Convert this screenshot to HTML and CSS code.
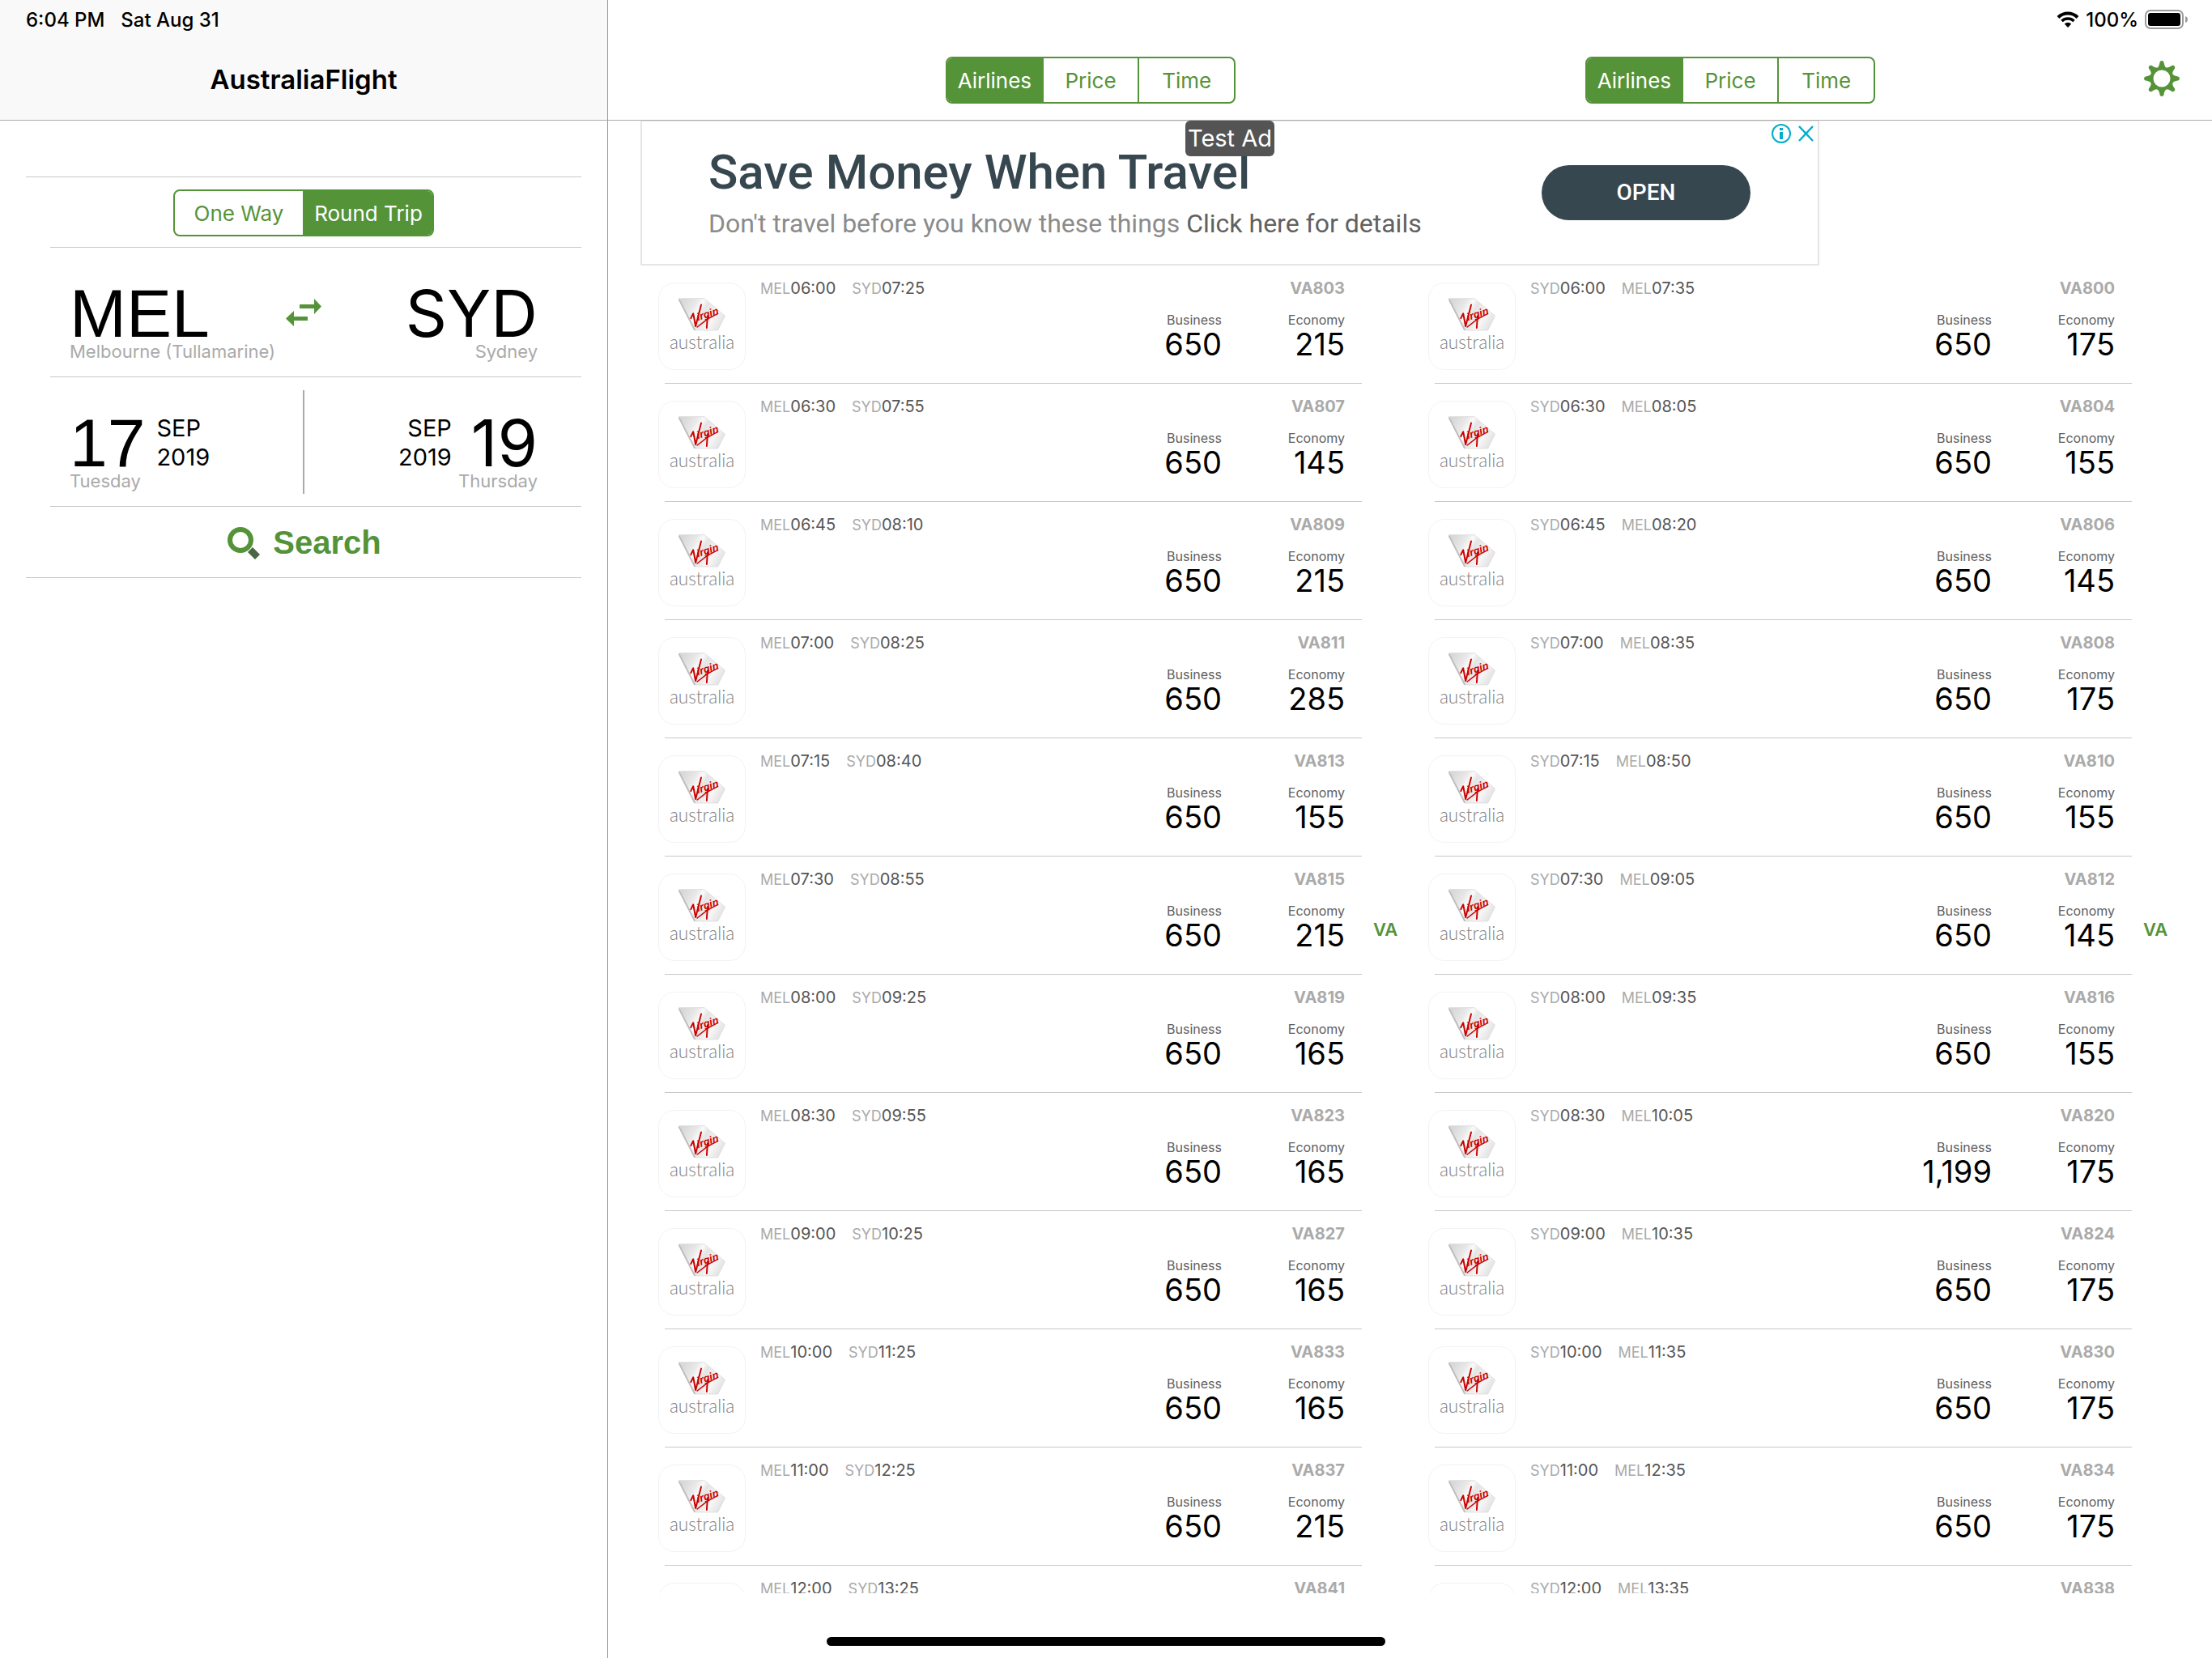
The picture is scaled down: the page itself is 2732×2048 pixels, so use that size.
FILE: index.html
```html
<!DOCTYPE html>
<html lang="en">
<head>
  <meta charset="UTF-8" />
  <meta name="viewport" content="width=device-width, initial-scale=1.0"/>
  <title>AustraliaFlight</title>
  <link rel="stylesheet" href="styles.css">
</head>
<body>
  <svg class="defs" aria-hidden="true">
    <defs>
      <linearGradient id="tail" x1="0" y1="0.3" x2="1" y2="0.7">
        <stop offset="0" stop-color="#d8d8d8"/>
        <stop offset="0.25" stop-color="#e8e8e8"/>
        <stop offset="0.38" stop-color="#fafafa"/>
        <stop offset="0.5" stop-color="#e4e4e4"/>
        <stop offset="0.75" stop-color="#f6f6f6"/>
        <stop offset="1" stop-color="#e0e0e0"/>
      </linearGradient>
      <symbol id="virgin" viewBox="0 0 108 108">
        <path d="M25 19H57L83 41L74 59H45Z" fill="url(#tail)" stroke="#dedede"/>
        <path d="M25 20L45 59" fill="none" stroke="#bdbdbd" stroke-width="2"/>
        <g fill="none" stroke="#cc0000" stroke-linecap="round" stroke-linejoin="round">
          <path d="M40 44L43 38L46 54L53 27" stroke-width="2"/>
          <path d="M48 55L61 45L74 38" stroke-width="1.5"/>
          <path d="M61 41L60 56" stroke-width="2"/>
        </g>
        <text class="virgin-word" transform="rotate(-18 49 47)" x="49" y="47">irgin</text>
        <text class="australia-word" x="54" y="83" text-anchor="middle">australia</text>
      </symbol>
    </defs>
  </svg>

  <aside class="sidebar">
    <header class="sidebar-header">
      <div class="status"><span>6:04 PM</span><span>Sat Aug 31</span></div>
      <h1>AustraliaFlight</h1>
    </header>
    <form class="search-form" id="searchForm">
      <hr>
      <div class="trip-row">
        <div class="segments trip">
          <button type="button">One Way</button>
          <button type="button" class="active">Round Trip</button>
        </div>
      </div>
      <hr class="inset">
      <div class="pair">
        <button type="button" class="choice">
          <span class="big neue">MEL</span>
          <span class="label">Melbourne (Tullamarine)</span>
        </button>
        <button type="button" class="swap" aria-label="Swap airports">
          <svg width="44" height="34" viewBox="0 0 44 34" fill="#559339"><path d="M17 7H35V0L44 9.500L35 19V12H17Z"/><path d="M27 22H10V15L0 24.500L10 34V27H27Z"/></svg>
        </button>
        <button type="button" class="choice right">
          <span class="big">SYD</span>
          <span class="label">Sydney</span>
        </button>
      </div>
      <hr class="inset">
      <div class="pair">
        <button type="button" class="choice">
          <span class="date"><span class="big neue">17</span><span class="month">SEP<br>2019</span></span>
          <span class="label">Tuesday</span>
        </button>
        <div class="bar"></div>
        <button type="button" class="choice right">
          <span class="date"><span class="month">SEP<br>2019</span><span class="big">19</span></span>
          <span class="label">Thursday</span>
        </button>
      </div>
      <hr class="inset">
      <button type="submit" class="search">
        <svg width="40" height="40" viewBox="0 0 40 40"><path d="M25 31L31 25L40 34L34 40Z" fill="#4a6741"/><circle cx="16" cy="16" r="13" fill="none" stroke="#559339" stroke-width="6"/></svg>
        Search
      </button>
      <hr>
    </form>
  </aside>

  <main class="content">
    <header class="content-header">
      <div class="status status-right">
        <svg width="28" height="20" viewBox="0 0 28 20"><path d="M2 7.500A17 17 0 0 1 26 7.500" fill="none" stroke="#000" stroke-width="4"/><path d="M6.500 12A11 11 0 0 1 21.500 12" fill="none" stroke="#000" stroke-width="3.600"/><path d="M9.800 15.500A6 6 0 0 1 18.200 15.500L14 20Z"/></svg>
        <span>100%</span>
        <svg width="53" height="24" viewBox="0 0 53 24"><rect x="1" y="1" width="46" height="22" rx="6" fill="none" stroke="#9b9b9b" stroke-width="2"/><rect x="4" y="4" width="40" height="16" rx="3"/><path d="M50 8Q53 9 53 12T50 16Z" fill="#9b9b9b"/></svg>
      </div>
      <div class="toolbar">
        <div class="segments">
          <button type="button" class="active">Airlines</button>
          <button type="button">Price</button>
          <button type="button">Time</button>
        </div>
        <div class="segments">
          <button type="button" class="active">Airlines</button>
          <button type="button">Price</button>
          <button type="button">Time</button>
        </div>
        <button type="button" class="settings" aria-label="Settings">
          <svg width="44" height="44" viewBox="-22 -22 44 44">
            <defs><path id="tooth" d="M-6.500 -12Q-3 -15 -2.500 -20Q-2 -22 0 -22Q2 -22 2.500 -20Q3 -15 6.500 -12Z"/></defs>
            <g fill="#559339">
              <use href="#tooth"/><use href="#tooth" transform="rotate(45)"/><use href="#tooth" transform="rotate(90)"/><use href="#tooth" transform="rotate(135)"/>
              <use href="#tooth" transform="rotate(180)"/><use href="#tooth" transform="rotate(225)"/><use href="#tooth" transform="rotate(270)"/><use href="#tooth" transform="rotate(315)"/>
            </g>
            <circle r="12.500" fill="#fff" stroke="#559339" stroke-width="4"/>
          </svg>
        </button>
      </div>
    </header>

    <section class="ad">
      <div class="ad-text">
        <h2>Save Money When Travel</h2>
        <p>Don't travel before you know these things <a href="#">Click here for details</a></p>
      </div>
      <button type="button" class="open">OPEN</button>
      <span class="test-ad">Test Ad</span>
      <svg class="ad-choices" width="52" height="24" viewBox="0 0 52 24" fill="none" stroke="#00aecd" stroke-width="2"><circle cx="12" cy="12" r="11"/><path d="M12 10V19M12 5V8" stroke-width="4"/><path d="M34 3L51 21M51 3L34 21" stroke-width="2.500"/></svg>
    </section>

    <div class="lists">
      <section class="panel">
        <ol class="flights" id="outbound"></ol>
        <a class="index" href="#outbound">VA</a>
      </section>
      <section class="panel">
        <ol class="flights" id="inbound"></ol>
        <a class="index" href="#inbound">VA</a>
      </section>
    </div>
  </main>
  <div class="home-indicator"></div>
  <script src="script.js"></script>
</body>
</html>
```
FILE: styles.css
```css
* {
  box-sizing: border-box;
}

body {
  margin: 0;
  height: 100vh;
  display: flex;
  overflow: hidden;
  background: #fff;
  color: #000;
  font-family: Inter, "Liberation Sans", sans-serif;
  font-size: 26px;
}

button {
  margin: 0;
  padding: 0;
  border: none;
  background: none;
  color: inherit;
  font: inherit;
  cursor: pointer;
}

svg {
  display: block;
}

h1, h2, p, ol {
  margin: 0;
  padding: 0;
}

.defs {
  position: absolute;
  width: 0;
  height: 0;
}

/* sidebar */
.sidebar {
  flex: 0 0 751px;
  border-right: 1px solid #999;
}

.sidebar-header,
.content-header {
  height: 149px;
  border-bottom: 1px solid #acacac;
}

.sidebar-header {
  background: #f9f9f9;
}

.status {
  display: flex;
  align-items: center;
  gap: 20px;
  height: 48px;
  padding: 0 32px;
  font-size: 24px;
  font-weight: 500;
}

h1 {
  font-size: 33px;
  line-height: 100px;
  font-weight: 600;
  text-align: center;
}

.search-form {
  padding: 69px 32px 0;
}

hr {
  margin: 0;
  border: none;
  height: 1px;
  background: #c8c8c8;
}

hr.inset {
  margin-left: 30px;
}

.trip-row {
  display: flex;
  justify-content: center;
  padding: 15px 0 13px;
}

.segments {
  display: flex;
  width: 358px;
  height: 58px;
  border: 2px solid #559339;
  border-radius: 8px;
  overflow: hidden;
  color: #559339;
}

.segments button {
  flex: 1;
}

.segments button + button {
  border-left: 2px solid #559339;
}

.segments .active {
  background: #559339;
  color: #fff;
}

.trip {
  width: 322px;
}

.pair {
  display: grid;
  grid-template-columns: 1fr auto 1fr;
  align-items: center;
  height: 159px;
  padding: 0 54px;
}

.choice {
  align-self: start;
  padding-top: 49px;
  display: flex;
  flex-direction: column;
  align-items: flex-start;
  white-space: nowrap;
}

.right {
  align-items: flex-end;
}

.big {
  font-size: 80px;
  line-height: 64px;
}

.neue {
  font-family: "Liberation Sans", sans-serif;
  font-size: 84px;
}

.label {
  font-size: 22px;
  line-height: 30px;
  color: #aaa;
}

.date {
  display: flex;
  align-items: center;
  gap: 14px;
  height: 64px;
}

.month {
  font-size: 29px;
  line-height: 36px;
  text-align: left;
}

.right .date {
  gap: 24px;
}

.right .month {
  text-align: right;
}

.bar {
  width: 2px;
  height: 128px;
  background: #aaa;
}

.search {
  display: flex;
  align-items: center;
  justify-content: center;
  gap: 16px;
  width: 100%;
  height: 87px;
  padding: 2px 0 0 2px;
  color: #559339;
  font-family: "Liberation Sans", sans-serif;
  font-size: 40px;
  font-weight: bold;
}

/* flights */
.content {
  flex: 1;
  display: flex;
  flex-direction: column;
  padding-bottom: 80px;
}

.status-right {
  justify-content: flex-end;
  gap: 8px;
  padding-right: 30px;
}

.toolbar {
  display: flex;
  align-items: center;
  justify-content: flex-end;
  height: 100px;
  padding: 2px 40px 0 0;
}

.toolbar .segments + .segments {
  margin-left: 432px;
}

.settings {
  margin-left: 332px;
  padding-bottom: 4px;
}

.ad {
  position: relative;
  display: flex;
  align-items: center;
  justify-content: space-between;
  width: 1456px;
  height: 179px;
  margin-left: 40px;
  padding: 0 83px 0 82px;
  border: 2px solid #e5e5e5;
  border-top-width: 1px;
  font-family: Roboto, sans-serif;
}

.ad h2 {
  font-size: 60px;
  line-height: 72px;
  font-weight: 500;
  color: #37474f;
}

.ad p {
  margin-top: 3px;
  font-size: 32px;
  line-height: 48px;
  color: #8b8b8b;
}

.ad a {
  color: #616161;
  text-decoration: none;
}

.open {
  width: 258px;
  height: 68px;
  padding-bottom: 2px;
  border-radius: 34px;
  background: #37474f;
  color: #fff;
  font-size: 28px;
  font-weight: 500;
}

.test-ad {
  position: absolute;
  top: -1px;
  left: 671px;
  width: 110px;
  border-radius: 6px;
  background: #545454;
  color: #fff;
  font-family: Inter, sans-serif;
  font-size: 29px;
  line-height: 44px;
  text-align: center;
}

.ad-choices {
  position: absolute;
  top: 3px;
  right: 5px;
}

.lists {
  flex: 1;
  min-height: 0;
  display: flex;
  padding: 0 41px 0 38px;
}

.panel {
  flex: 1;
  display: flex;
  overflow: hidden;
}

.flights {
  flex: 1;
  padding-left: 32px;
  list-style: none;
}

.index {
  width: 58px;
  align-self: center;
  padding-left: 14px;
  color: #559339;
  font-size: 22px;
  font-weight: 600;
  text-decoration: none;
}

.flight {
  display: flex;
  gap: 18px;
  height: 146px;
  padding: 16px 21px 0 0;
  border-bottom: 1px solid #c8c8c8;
}

.logo {
  flex: none;
  width: 108px;
  height: 108px;
  margin: 5px 0 0 -8px;
  border: 1px solid #f3f3f3;
  border-radius: 20px;
}

.virgin-word {
  font-family: "Liberation Sans", sans-serif;
  font-size: 13px;
  font-style: italic;
  font-weight: bold;
  fill: #cc0000;
}

.australia-word {
  font-family: Lato, sans-serif;
  font-size: 23px;
  font-weight: 300;
  fill: #808080;
}

.times {
  flex: 1;
  display: flex;
  gap: 20px;
  font-size: 20px;
  line-height: 24px;
  color: #555;
}

.airport {
  font-size: 18px;
  color: #aaa;
}

.details {
  text-align: right;
}

.number {
  font-size: 20px;
  line-height: 24px;
  font-weight: 700;
  color: #aaa;
}

.fares {
  display: flex;
  margin-top: 17px;
}

.fare {
  width: 152px;
}

.cabin {
  font-size: 16px;
  line-height: 20px;
  color: #606060;
}

.price {
  font-size: 38px;
  line-height: 40px;
}

.home-indicator {
  position: fixed;
  left: 50%;
  bottom: 15px;
  width: 690px;
  height: 11px;
  margin-left: -345px;
  border-radius: 6px;
  background: #000;
}
```
FILE: script.js
```js
// departure, arrival, flight number, business, economy
const outbound = [
  ["06:00", "07:25", "VA803", "650", "215"],
  ["06:30", "07:55", "VA807", "650", "145"],
  ["06:45", "08:10", "VA809", "650", "215"],
  ["07:00", "08:25", "VA811", "650", "285"],
  ["07:15", "08:40", "VA813", "650", "155"],
  ["07:30", "08:55", "VA815", "650", "215"],
  ["08:00", "09:25", "VA819", "650", "165"],
  ["08:30", "09:55", "VA823", "650", "165"],
  ["09:00", "10:25", "VA827", "650", "165"],
  ["10:00", "11:25", "VA833", "650", "165"],
  ["11:00", "12:25", "VA837", "650", "215"],
  ["12:00", "13:25", "VA841", "650", "215"],
];

const inbound = [
  ["06:00", "07:35", "VA800", "650", "175"],
  ["06:30", "08:05", "VA804", "650", "155"],
  ["06:45", "08:20", "VA806", "650", "145"],
  ["07:00", "08:35", "VA808", "650", "175"],
  ["07:15", "08:50", "VA810", "650", "155"],
  ["07:30", "09:05", "VA812", "650", "145"],
  ["08:00", "09:35", "VA816", "650", "155"],
  ["08:30", "10:05", "VA820", "1,199", "175"],
  ["09:00", "10:35", "VA824", "650", "175"],
  ["10:00", "11:35", "VA830", "650", "175"],
  ["11:00", "12:35", "VA834", "650", "175"],
  ["12:00", "13:35", "VA838", "650", "175"],
];

function render(id, from, to, flights) {
  document.getElementById(id).innerHTML = flights.map(([dep, arr, number, business, economy]) => `
    <li class="flight">
      <svg class="logo"><use href="#virgin"/></svg>
      <div class="times">
        <div><span class="airport">${from}</span>${dep}</div>
        <div><span class="airport">${to}</span>${arr}</div>
      </div>
      <div class="details">
        <div class="number">${number}</div>
        <div class="fares">
          <div class="fare"><div class="cabin">Business</div><div class="price">${business}</div></div>
          <div class="fare"><div class="cabin">Economy</div><div class="price">${economy}</div></div>
        </div>
      </div>
    </li>`).join("");
}

render("outbound", "MEL", "SYD", outbound);
render("inbound", "SYD", "MEL", inbound);

document.querySelectorAll(".segments").forEach((group) => {
  group.addEventListener("click", (e) => {
    const button = e.target.closest("button");
    if (!button) return;
    group.querySelector(".active").classList.remove("active");
    button.classList.add("active");
  });
});

document.getElementById("searchForm").addEventListener("submit", (e) => e.preventDefault());
```
